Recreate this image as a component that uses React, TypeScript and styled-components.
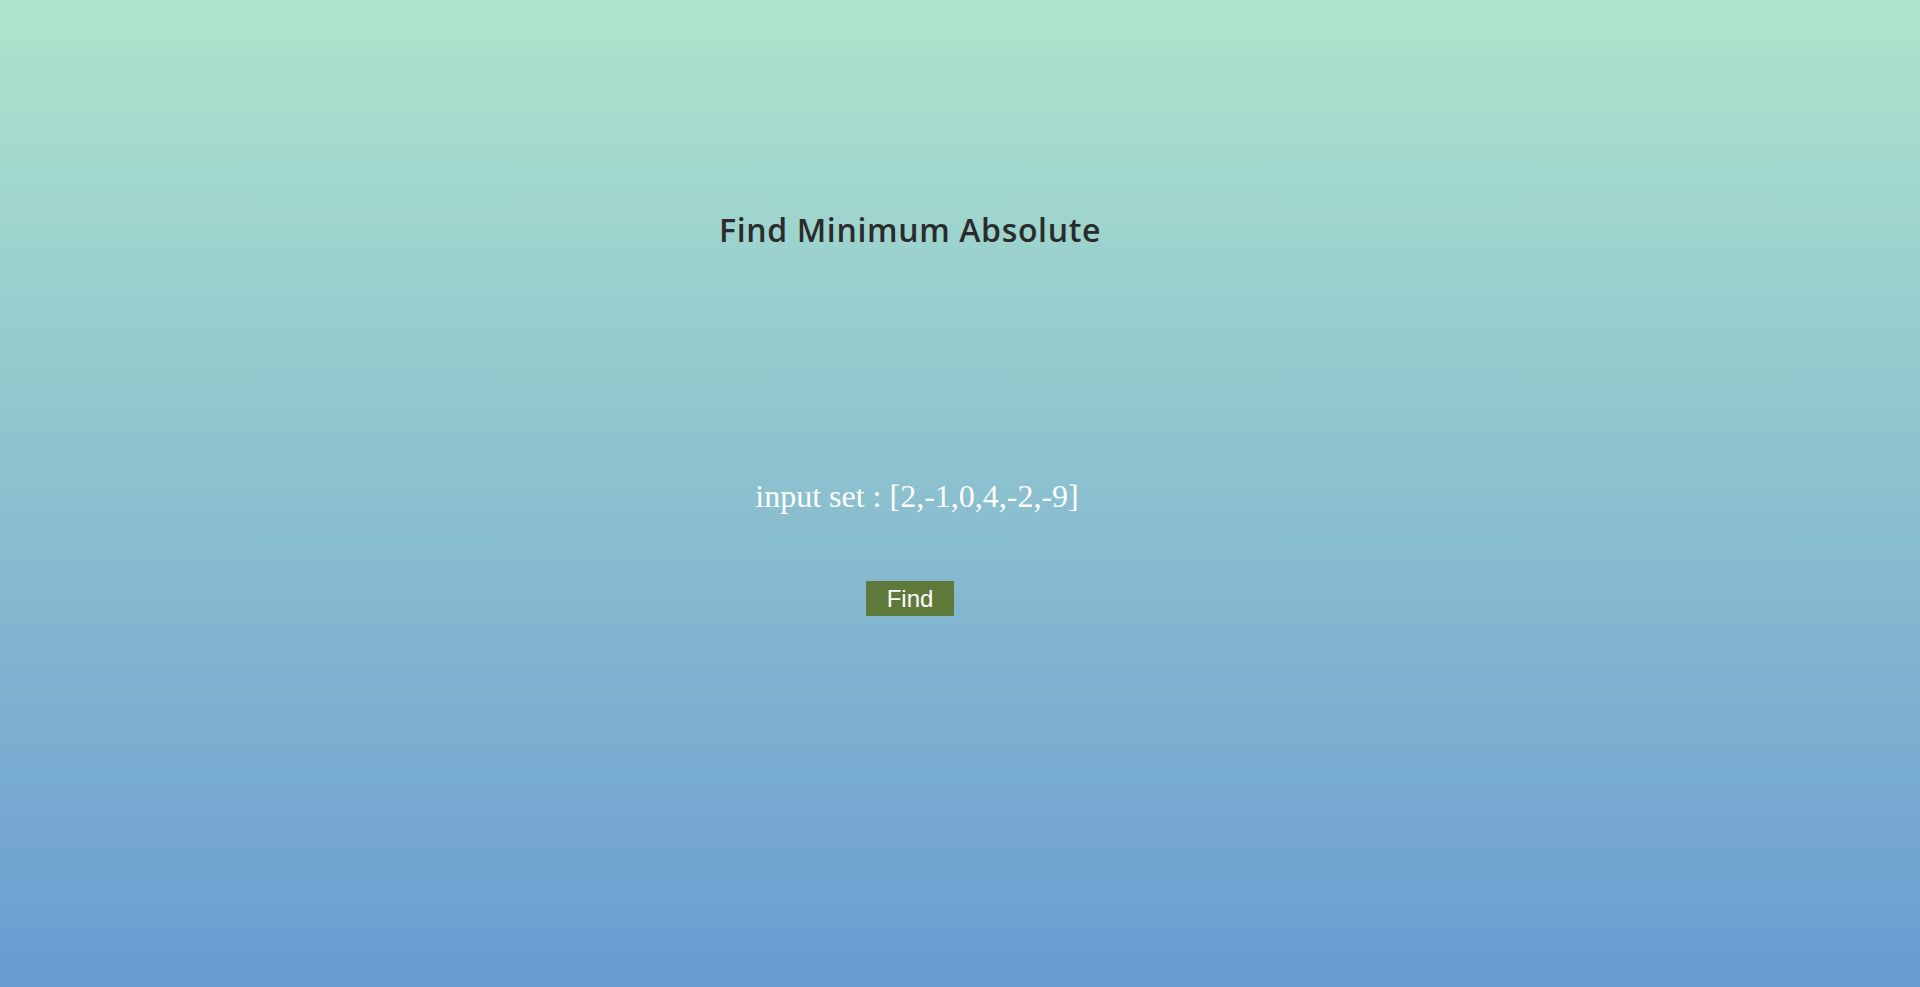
import React from "react";
import styled, { createGlobalStyle } from "styled-components";

const GlobalStyle = createGlobalStyle`
  html, body { margin: 0; padding: 0; }
  body { background: #6a9bd2; }
`;

const Page = styled.main`
  box-sizing: border-box;
  height: 987px;
  display: flex;
  flex-direction: column;
  align-items: center;
  padding-right: 100px;
  background: linear-gradient(to bottom, #ade5cc 0%, #6a9bd2 100%);
  overflow: hidden;
`;

const Title = styled.h1`
  margin: 208px 0 0;
  font-family: "Open Sans", "Noto Sans", sans-serif;
  font-weight: 600;
  font-size: 32px;
  line-height: 44px;
  letter-spacing: 0.65px;
  color: #2b2b2b;
`;

const InputSet = styled.p`
  margin: 226px 0 0 14px;
  font-family: "Liberation Serif", "Times New Roman", serif;
  font-size: 32px;
  line-height: 36px;
  color: #ffffff;
`;

const FindButton = styled.button`
  margin-top: 67px;
  width: 88px;
  height: 35px;
  border: none;
  padding: 0;
  background: #5f7a3a;
  color: #ffffff;
  font-family: "Liberation Sans", Arial, sans-serif;
  font-size: 24px;
  cursor: pointer;
`;

export default function App() {
  return (
    <>
      <GlobalStyle />
      <Page>
        <Title>Find Minimum Absolute</Title>
        <InputSet>input set : [2,-1,0,4,-2,-9]</InputSet>
        <FindButton>Find</FindButton>
      </Page>
    </>
  );
}
